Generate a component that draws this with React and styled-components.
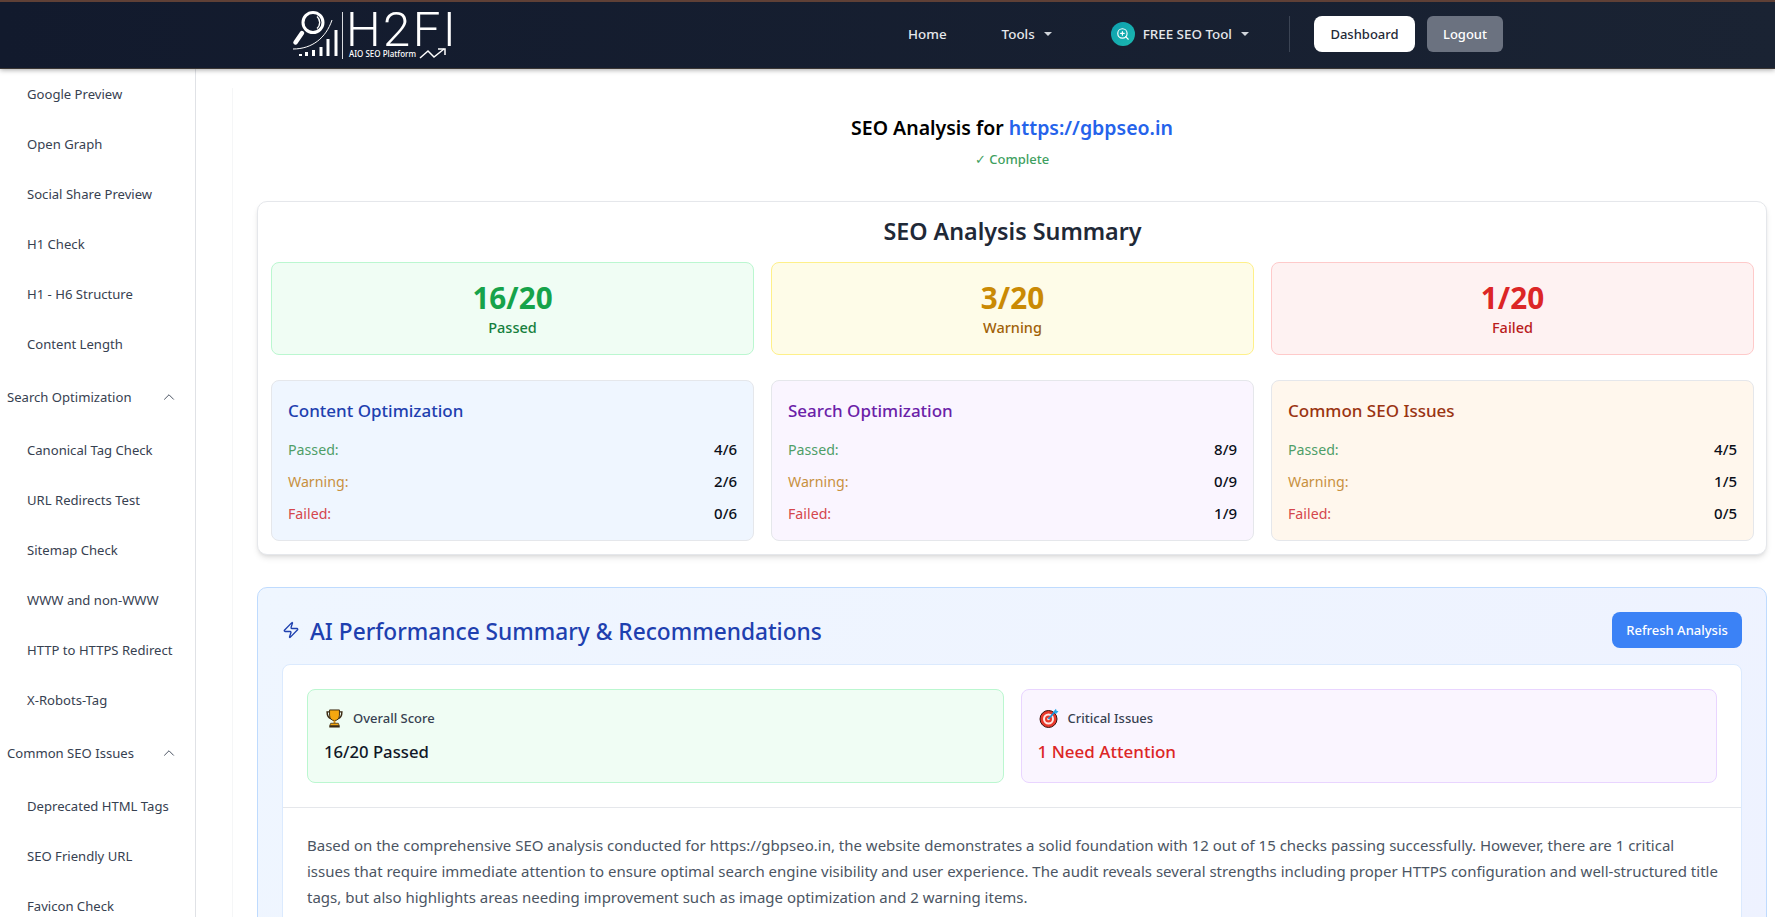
import React from 'react';
import styled, { createGlobalStyle } from 'styled-components';
import { ChevronUp, ZoomIn, Zap } from 'lucide-react';

const GlobalStyle = createGlobalStyle`
  * { box-sizing: border-box; }
  html, body { margin: 0; height: 100%; overflow: hidden; background: #fff; }
  body { font-family: "Noto Sans", "Open Sans", sans-serif; color: #111827; }
`;

const contentItems = ['Google Preview', 'Open Graph', 'Social Share Preview', 'H1 Check', 'H1 - H6 Structure', 'Content Length'];
const searchItems = ['Canonical Tag Check', 'URL Redirects Test', 'Sitemap Check', 'WWW and non-WWW', 'HTTP to HTTPS Redirect', 'X-Robots-Tag'];
const commonItems = ['Deprecated HTML Tags', 'SEO Friendly URL', 'Favicon Check'];

const stats = [
  { tone: 'green', value: '16/20', label: 'Passed' },
  { tone: 'yellow', value: '3/20', label: 'Warning' },
  { tone: 'red', value: '1/20', label: 'Failed' },
];

const categories = [
  { tone: 'blue', title: 'Content Optimization', passed: '4/6', warning: '2/6', failed: '0/6' },
  { tone: 'purple', title: 'Search Optimization', passed: '8/9', warning: '0/9', failed: '1/9' },
  { tone: 'orange', title: 'Common SEO Issues', passed: '4/5', warning: '1/5', failed: '0/5' },
];

const statColors = {
  green: { bg: '#f0fdf4', border: '#bbf7d0', value: '#16a34a', label: '#15803d' },
  yellow: { bg: '#fefce8', border: '#fef08a', value: '#ca8a04', label: '#a16207' },
  red: { bg: '#fef2f2', border: '#fecaca', value: '#dc2626', label: '#b91c1c' },
};

const categoryColors = {
  blue: { bg: '#eff6ff', title: '#1e40af' },
  purple: { bg: '#faf5ff', title: '#6b21a8' },
  orange: { bg: '#fff7ed', title: '#9a3412' },
};

const LogoMark = () => (
  <svg width="50" height="50" viewBox="0 0 50 50" fill="none" stroke="#fff">
    <circle cx="21" cy="12.5" r="10" strokeWidth="3" />
    <path d="M25 6.500a8 8 0 0 1 0 12" strokeWidth="1.4" />
    <path d="M10 23 3.500 32.500" strokeWidth="4.5" strokeLinecap="round" />
    <path d="M1 39C20 39 34 28 40 10" strokeWidth="1" />
    <g fill="#fff" stroke="none">
      <rect x="7" y="44" width="3" height="2" />
      <rect x="13" y="42" width="3" height="4" />
      <rect x="20" y="40" width="3" height="6" />
      <rect x="27.500" y="37" width="3" height="9" />
      <rect x="34.500" y="29" width="3" height="17" />
      <rect x="42.500" y="20" width="3" height="26" />
    </g>
  </svg>
);

const Trophy = () => (
  <svg width="19" height="19" viewBox="0 0 20 20">
    <path d="M5 3H2.200c0 4 1.300 6.500 4.300 7.200M15 3h2.800c0 4-1.300 6.500-4.300 7.200" fill="none" stroke="#3b2a12" strokeWidth="1.500" />
    <path d="M4.800 1h10.400v5.500c0 3.600-2.300 5.700-5.200 5.700S4.800 10.100 4.800 6.500z" fill="#f5a70f" stroke="#3b2a12" strokeWidth="1" />
    <path d="M9 12h2v3H9z" fill="#e08e0b" />
    <path d="M6 15h8l1 2.500H5z" fill="#f5a70f" stroke="#3b2a12" strokeWidth=".8" />
    <path d="M4.500 17.500h11V19.500h-11z" fill="#3b2a12" />
  </svg>
);

const Target = () => (
  <svg width="20" height="20" viewBox="0 0 20 20">
    <circle cx="9.500" cy="11" r="8.500" fill="#e8392b" stroke="#3a1512" strokeWidth="1" />
    <circle cx="9.500" cy="11" r="5.500" fill="#fde8e4" />
    <circle cx="9.500" cy="11" r="3.500" fill="#e8392b" />
    <circle cx="9.500" cy="11" r="1.300" fill="#fde8e4" />
    <path d="M9.500 11 16 3.500" stroke="#1c8fd6" strokeWidth="1.800" />
    <path d="M14.500 3.500 17 .8l.5 2 2 .5L17 6z" fill="#28a9e8" />
  </svg>
);

const App = () => {
  return (
    <Page>
      <GlobalStyle />
      <Header>
        <Logo>
          <LogoMark />
          <LogoRule />
          <LogoText>
            <LogoName>H2FI</LogoName>
            <LogoSub>
              <span>AIO SEO Platform</span>
              <svg width="28" height="11" viewBox="0 0 28 11" fill="none" stroke="#fff" strokeWidth="1.500">
                <path d="M1 10 9 3l6 6 10-8" />
                <path d="M19 1h7v6" />
              </svg>
            </LogoSub>
          </LogoText>
        </Logo>
        <Nav>
          <NavLink>Home</NavLink>
          <NavLink $left={55}>Tools<Caret /></NavLink>
          <NavLink $left={59}>
            <NavBadge><ZoomIn size={14} strokeWidth={2} /></NavBadge>
            FREE SEO Tool<Caret />
          </NavLink>
          <NavRule />
          <DashboardButton>Dashboard</DashboardButton>
          <LogoutButton>Logout</LogoutButton>
        </Nav>
      </Header>

      <Body>
        <Sidebar>
          {contentItems.map(item => <SideItem key={item}>{item}</SideItem>)}
          <SideSection>Search Optimization<ChevronUp size={18} strokeWidth={1.2} /></SideSection>
          {searchItems.map(item => <SideItem key={item}>{item}</SideItem>)}
          <SideSection>Common SEO Issues<ChevronUp size={18} strokeWidth={1.2} /></SideSection>
          {commonItems.map(item => <SideItem key={item}>{item}</SideItem>)}
        </Sidebar>

        <Main>
          <Content>
            <TitleBlock>
              <PageTitle>SEO Analysis for <a>https://gbpseo.in</a></PageTitle>
              <Status>✓ Complete</Status>
            </TitleBlock>

            <SummaryCard>
              <SummaryTitle>SEO Analysis Summary</SummaryTitle>
              <ThreeCols>
                {stats.map(s => (
                  <StatCard key={s.label} $tone={s.tone}>
                    <StatValue $tone={s.tone}>{s.value}</StatValue>
                    <StatLabel $tone={s.tone}>{s.label}</StatLabel>
                  </StatCard>
                ))}
              </ThreeCols>
              <CategoryGrid>
                {categories.map(c => (
                  <CategoryCard key={c.title} $tone={c.tone}>
                    <CategoryTitle $tone={c.tone}>{c.title}</CategoryTitle>
                    <CategoryRow><Passed>Passed:</Passed><b>{c.passed}</b></CategoryRow>
                    <CategoryRow><Warned>Warning:</Warned><b>{c.warning}</b></CategoryRow>
                    <CategoryRow><Failed>Failed:</Failed><b>{c.failed}</b></CategoryRow>
                  </CategoryCard>
                ))}
              </CategoryGrid>
            </SummaryCard>

            <AiCard>
              <AiHeader>
                <AiTitle><Zap size={18} strokeWidth={1.8} />AI Performance Summary &amp; Recommendations</AiTitle>
                <RefreshButton>Refresh Analysis</RefreshButton>
              </AiHeader>
              <AiInner>
                <ScoreGrid>
                  <ScoreCard $tone="green">
                    <ScoreLabel><Trophy />Overall Score</ScoreLabel>
                    <ScoreValue>16/20 Passed</ScoreValue>
                  </ScoreCard>
                  <ScoreCard $tone="purple">
                    <ScoreLabel><Target />Critical Issues</ScoreLabel>
                    <ScoreValue $danger>1 Need Attention</ScoreValue>
                  </ScoreCard>
                </ScoreGrid>
                <Summary>
                  Based on the comprehensive SEO analysis conducted for https://gbpseo.in, the website demonstrates a solid foundation with 12 out of 15 checks passing successfully. However, there are 1 critical<br />
                  issues that require immediate attention to ensure optimal search engine visibility and user experience. The audit reveals several strengths including proper HTTPS configuration and well-structured title<br />
                  tags, but also highlights areas needing improvement such as image optimization and 2 warning items.
                </Summary>
              </AiInner>
            </AiCard>
          </Content>
        </Main>
      </Body>
    </Page>
  );
};

export default App;

const Page = styled.div`
  height: 917px;
  overflow: hidden;
  display: flex;
  flex-direction: column;
`;

const Header = styled.header`
  height: 68px;
  flex: none;
  position: relative;
  z-index: 2;
  display: flex;
  align-items: center;
  justify-content: space-between;
  padding: 0 272px 2px 292px;
  background: linear-gradient(90deg, #121a2d, #1a2333);
  border-top: 2px solid #5f4036;
  box-shadow: 0 1px 0 #3a3634, 0 2px 5px rgba(0, 0, 0, 0.35);
`;

const Logo = styled.div`
  display: flex;
  align-items: center;
  margin-top: 2px;
`;

const LogoRule = styled.div`
  width: 1px;
  height: 47px;
  background: #d8dade;
  margin: 0 3px 0 0;
`;

const LogoText = styled.div`
  display: flex;
  flex-direction: column;
  gap: 1px;
  color: #fff;
`;

const LogoName = styled.div`
  font-family: Roboto, sans-serif;
  font-weight: 300;
  font-size: 49px;
  line-height: 35px;
  letter-spacing: 2.4px;
`;

const LogoSub = styled.div`
  display: flex;
  align-items: center;
  gap: 3px;
  padding-left: 3px;
  font-size: 8px;
  font-weight: 500;
  line-height: 11px;
  white-space: nowrap;
`;

const Nav = styled.nav`
  display: flex;
  align-items: center;
`;

const NavLink = styled.a`
  display: flex;
  align-items: center;
  margin-left: ${p => p.$left || 0}px;
  color: #e5e7eb;
  font-size: 13.4px;
  font-weight: 500;
`;

const Caret = styled.i`
  width: 0;
  height: 0;
  margin-left: 9px;
  border-top: 4px solid #d1d5db;
  border-left: 4px solid transparent;
  border-right: 4px solid transparent;
`;

const NavBadge = styled.span`
  width: 24px;
  height: 24px;
  margin-right: 8px;
  display: flex;
  align-items: center;
  justify-content: center;
  border-radius: 50%;
  color: #fff;
  background: linear-gradient(135deg, #0d9fb0, #1cb8ae);
`;

const NavRule = styled.div`
  width: 1px;
  height: 36px;
  margin: 0 24px 0 40px;
  background: #3b4454;
`;

const DashboardButton = styled.button`
  width: 101px;
  height: 36px;
  border: 0;
  border-radius: 8px;
  background: #fff;
  color: #1f2937;
  font: 500 13px "Noto Sans", sans-serif;
`;

const LogoutButton = styled.button`
  width: 76px;
  height: 36px;
  margin-left: 12px;
  border: 0;
  border-radius: 6px;
  background: #6b7280;
  color: #fff;
  font: 500 13px "Noto Sans", sans-serif;
`;

const Body = styled.div`
  flex: 1;
  display: flex;
  min-height: 0;
`;

const Sidebar = styled.aside`
  width: 196px;
  flex: none;
  padding-top: 1px;
  border-right: 1px solid #e0e2e6;
  overflow: hidden;
`;

const SideItem = styled.div`
  height: 50px;
  padding-left: 27px;
  display: flex;
  align-items: center;
  font-size: 13.1px;
  color: #374151;
  white-space: nowrap;
`;

const SideSection = styled.div`
  height: 56px;
  padding: 0 17px 0 7px;
  display: flex;
  align-items: center;
  justify-content: space-between;
  font-size: 13.1px;
  color: #374151;
  white-space: nowrap;
`;

const Main = styled.main`
  flex: 1;
  min-width: 0;
  padding: 20px 8px 0 36px;
`;

const Content = styled.div`
  border-left: 1px solid #f5f6f7;
  padding: 26px 0 0 24px;
`;

const TitleBlock = styled.div`
  display: flex;
  flex-direction: column;
  align-items: center;
  gap: 7px;
  margin-bottom: 32px;
`;

const PageTitle = styled.h1`
  margin: 0;
  font-size: 19.5px;
  font-weight: 600;
  line-height: 28px;
  color: #000;
  a { color: #2563eb; }
`;

const Status = styled.div`
  font-size: 13px;
  font-weight: 500;
  line-height: 20px;
  color: #3f9f5f;
`;

const SummaryCard = styled.section`
  padding: 13px 12px 13px 13px;
  border: 1px solid #e5e7eb;
  border-radius: 10px;
  background: #fff;
  box-shadow: 0 4px 6px -1px rgba(0, 0, 0, 0.1), 0 2px 4px -2px rgba(0, 0, 0, 0.1);
`;

const SummaryTitle = styled.h2`
  margin: 0 0 15px;
  text-align: center;
  font-size: 23.3px;
  font-weight: 600;
  line-height: 32px;
  color: #1f2937;
`;

const ThreeCols = styled.div`
  display: grid;
  grid-template-columns: repeat(3, 1fr);
  gap: 17px;
`;

const CategoryGrid = styled(ThreeCols)`
  margin-top: 25px;
`;

const StatCard = styled.div`
  height: 93px;
  display: flex;
  flex-direction: column;
  align-items: center;
  justify-content: center;
  background: ${p => statColors[p.$tone].bg};
  border: 1px solid ${p => statColors[p.$tone].border};
  border-radius: 8px;
`;

const StatValue = styled.div`
  font-size: 29.7px;
  font-weight: 700;
  line-height: 36px;
  color: ${p => statColors[p.$tone].value};
`;

const StatLabel = styled.div`
  font-size: 14.5px;
  font-weight: 500;
  line-height: 22px;
  color: ${p => statColors[p.$tone].label};
`;

const CategoryCard = styled.div`
  height: 161px;
  padding: 16px;
  background: ${p => categoryColors[p.$tone].bg};
  border: 1px solid #e5e7eb;
  border-radius: 8px;
`;

const CategoryTitle = styled.h3`
  margin: 0 0 12px;
  font-size: 17px;
  font-weight: 500;
  line-height: 28px;
  color: ${p => categoryColors[p.$tone].title};
`;

const CategoryRow = styled.div`
  height: 24px;
  margin-bottom: 8px;
  display: flex;
  align-items: center;
  justify-content: space-between;
  font-size: 14.2px;
  b { font-weight: 500; font-size: 15px; color: #0b0f19; }
`;

const Passed = styled.span`
  color: #4f9e68;
`;

const Warned = styled.span`
  color: #c8913f;
`;

const Failed = styled.span`
  color: #d5474d;
`;

const AiCard = styled.section`
  height: 400px;
  margin-top: 32px;
  padding: 24px;
  border: 1px solid #bfdbfe;
  border-radius: 10px;
  background: linear-gradient(135deg, #eff6ff, #eef2ff);
`;

const AiHeader = styled.div`
  height: 36px;
  margin-bottom: 16px;
  display: flex;
  align-items: center;
  justify-content: space-between;
`;

const AiTitle = styled.h2`
  margin: 0;
  padding-top: 2px;
  display: flex;
  align-items: center;
  gap: 10px;
  font-size: 22.7px;
  font-weight: 500;
  color: #1e40af;
  svg { margin-top: -3px; }
`;

const RefreshButton = styled.button`
  width: 130px;
  height: 36px;
  border: 0;
  border-radius: 8px;
  background: #3b82f6;
  color: #fff;
  font: 500 13px "Noto Sans", sans-serif;
`;

const AiInner = styled.div`
  height: 400px;
  border: 1px solid #dbeafe;
  border-radius: 8px;
  background: #fff;
`;

const ScoreGrid = styled.div`
  display: grid;
  grid-template-columns: 1fr 1fr;
  gap: 17px;
  padding: 24px 24px 24px;
  border-bottom: 1px solid #e5e7eb;
`;

const ScoreCard = styled.div`
  height: 94px;
  padding: 16px;
  background: ${p => (p.$tone === 'green' ? '#f0fdf4' : '#faf5ff')};
  border: 1px solid ${p => (p.$tone === 'green' ? '#bbf7d0' : '#e9d5ff')};
  border-radius: 8px;
`;

const ScoreLabel = styled.div`
  height: 24px;
  display: flex;
  align-items: center;
  gap: 9px;
  font-size: 13px;
  font-weight: 500;
  color: #374151;
  svg { margin-left: 1px; }
`;

const ScoreValue = styled.div`
  margin-top: 9px;
  font-size: ${p => (p.$danger ? '17px' : '16.7px')};
  font-weight: 500;
  line-height: 26px;
  color: ${p => (p.$danger ? '#dc2626' : '#111827')};
`;

const Summary = styled.p`
  margin: 0;
  padding: 24px 12px 24px 24px;
  font-size: 15px;
  line-height: 26px;
  color: #4b5563;
`;
